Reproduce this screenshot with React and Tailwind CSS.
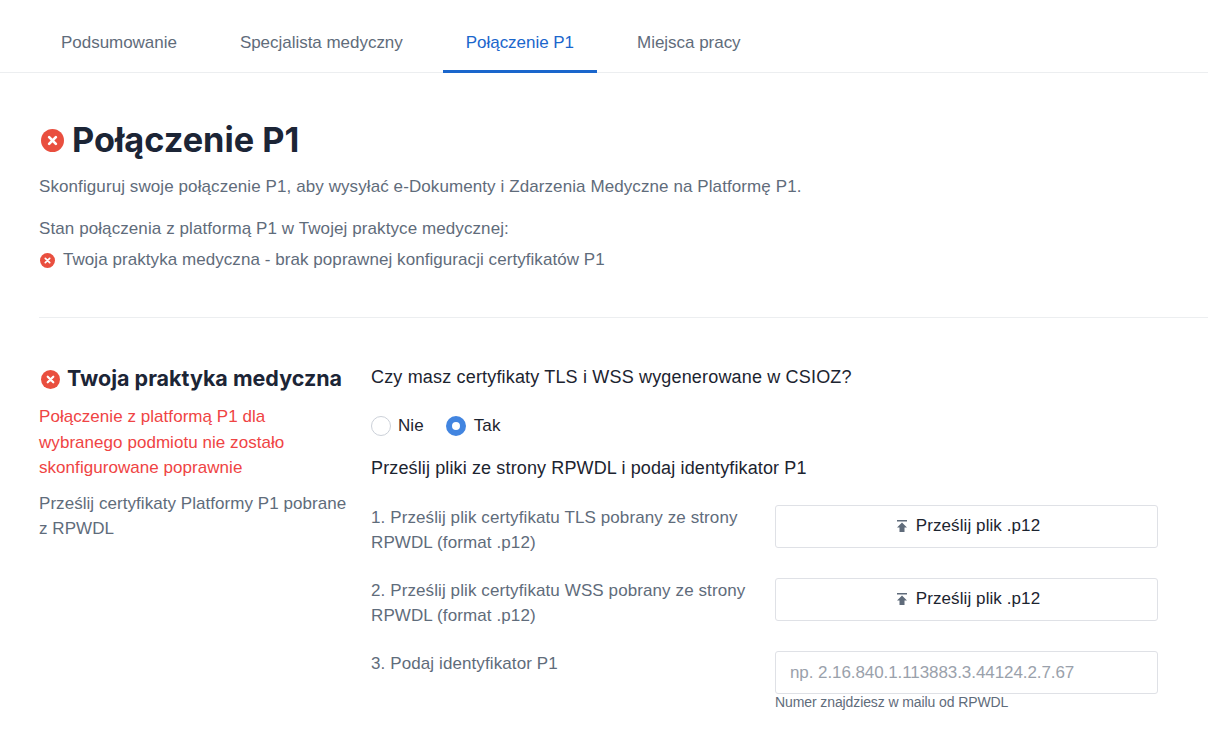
import { useState } from 'react';

function ErrorIcon({ className }) {
  return (
    <svg className={className} viewBox="0 0 24 24">
      <circle cx="12" cy="12" r="12" fill="#e94f3f" />
      <path d="M8.5 8.5l7 7M15.5 8.5l-7 7" stroke="#fff" strokeWidth="2.8" strokeLinecap="round" fill="none" />
    </svg>
  );
}

function UploadIcon() {
  return (
    <svg className="w-[10px] h-[12px] shrink-0" viewBox="0 0 10 12" fill="#5f6b7a">
      <rect x="0" y="0" width="10" height="1.5" />
      <path d="M5 2.5L10 7.5H7.5v4.5h-5V7.5H0z" />
    </svg>
  );
}

function UploadRow({ children }) {
  return (
    <div className="flex items-start">
      <p className="w-[404px] pr-6 text-[#5f6c7b] text-[17px] tracking-[0.1px] leading-[25px]">{children}</p>
      <button className="w-[383px] h-[43px] pl-[4px] pb-[1px] flex items-center justify-center gap-[9px] bg-white border border-[#dfe1e6] rounded-[3px] text-[#1c2430] text-[17px]">
        <UploadIcon />
        Prześlij plik .p12
      </button>
    </div>
  );
}

const tabs = ['Podsumowanie', 'Specjalista medyczny', 'Połączenie P1', 'Miejsca pracy'];

export default function App() {
  const [answer, setAnswer] = useState('tak');

  return (
    <div className="min-h-screen bg-white font-['Liberation_Sans',sans-serif] text-[17px] tracking-[0.09px] overflow-hidden">
      <nav className="h-[73px] border-b border-[#eceef0] flex gap-[17px] pl-[38px]">
        {tabs.map((tab) => (
          <button
            key={tab}
            className={
              tab === 'Połączenie P1'
                ? 'h-[73px] px-[23px] pt-[15px] tracking-[-0.03px] text-[#1a66cc] border-b-[3px] border-[#1a66cc]'
                : 'h-[73px] px-[23px] pt-[15px] tracking-[-0.03px] text-[#5f6c7b] border-b-[3px] border-transparent'
            }
          >
            {tab}
          </button>
        ))}
      </nav>

      <main className="pl-[39px]">
        <header className="pt-[47px] pb-[45px] border-b border-[#eceef0]">
          <div className="flex items-center gap-[8px] h-[40px]">
            <ErrorIcon className="w-[23px] h-[23px] ml-[2px] mt-[1px]" />
            <h1 className="font-['Inter',sans-serif] font-bold text-[34.3px] tracking-normal text-[#1c2536]">Połączenie P1</h1>
          </div>
          <p className="mt-[15px] leading-[24px] text-[#5f6c7b]">
            Skonfiguruj swoje połączenie P1, aby wysyłać e-Dokumenty i Zdarzenia Medyczne na Platformę P1.
          </p>
          <p className="mt-[18px] leading-[24px] text-[#5f6c7b]">Stan połączenia z platformą P1 w Twojej praktyce medycznej:</p>
          <div className="mt-[7px] flex items-center gap-[8px] leading-[24px] tracking-[0.06px] text-[#5f6c7b]">
            <ErrorIcon className="w-[15px] h-[15px] ml-[1px]" />
            Twoja praktyka medyczna - brak poprawnej konfiguracji certyfikatów P1
          </div>
        </header>

        <section className="flex pt-[46px]">
          <aside className="w-[332px] shrink-0 pr-[21px] tracking-[0.05px]">
            <div className="flex items-center gap-[7px] h-[28px]">
              <ErrorIcon className="w-[19px] h-[19px] ml-[2px] mt-[2px]" />
              <h2 className="font-['Inter',sans-serif] font-bold text-[21.5px] tracking-normal text-[#1c2536] whitespace-nowrap">Twoja praktyka medyczna</h2>
            </div>
            <p className="mt-[12px] text-[#ef4444] leading-[25.5px]">
              Połączenie z platformą P1 dla wybranego podmiotu nie zostało skonfigurowane poprawnie
            </p>
            <p className="mt-[10px] text-[#5f6c7b] leading-[25px]">Prześlij certyfikaty Platformy P1 pobrane z RPWDL</p>
          </aside>

          <div className="flex-1 text-[#1c2430]">
            <p className="mt-[1px] text-[18px] tracking-[0.17px] leading-[24px]">Czy masz certyfikaty TLS i WSS wygenerowane w CSIOZ?</p>
            <div className="mt-[25px] flex items-center h-[24px]">
              <button className="flex items-center gap-[7px]" onClick={() => setAnswer('nie')}>
                <span className={answer === 'nie' ? 'w-5 h-5 rounded-full border-[6px] border-[#4285e0] bg-white' : 'w-5 h-5 rounded-full border border-[#ccd1d9] bg-white'} />
                Nie
              </button>
              <button className="flex items-center gap-[8px] ml-[22px]" onClick={() => setAnswer('tak')}>
                <span className={answer === 'tak' ? 'w-5 h-5 rounded-full border-[6px] border-[#4285e0] bg-white' : 'w-5 h-5 rounded-full border border-[#ccd1d9] bg-white'} />
                Tak
              </button>
            </div>
            <p className="mt-[18px] text-[18px] tracking-[0.13px] leading-[24px]">Prześlij pliki ze strony RPWDL i podaj identyfikator P1</p>

            <div className="mt-[25px] flex flex-col gap-[23px]">
              <UploadRow>1. Prześlij plik certyfikatu TLS pobrany ze strony RPWDL (format .p12)</UploadRow>
              <UploadRow>2. Prześlij plik certyfikatu WSS pobrany ze strony RPWDL (format .p12)</UploadRow>
              <div className="flex items-start">
                <p className="w-[404px] pr-6 text-[#5f6c7b] text-[17px] tracking-[0.1px] leading-[25px]">3. Podaj identyfikator P1</p>
                <div className="w-[383px]">
                  <input
                    placeholder="np. 2.16.840.1.113883.3.44124.2.7.67"
                    className="w-full h-[43px] px-[14px] border border-[#dfe1e6] rounded-[3px] outline-none tracking-[-0.08px] placeholder:text-[#9aa1ab]"
                  />
                  <p className="text-[14px] tracking-[-0.1px] leading-[17px] text-[#5f6c7b]">Numer znajdziesz w mailu od RPWDL</p>
                </div>
              </div>
            </div>
          </div>
        </section>
      </main>
    </div>
  );
}
